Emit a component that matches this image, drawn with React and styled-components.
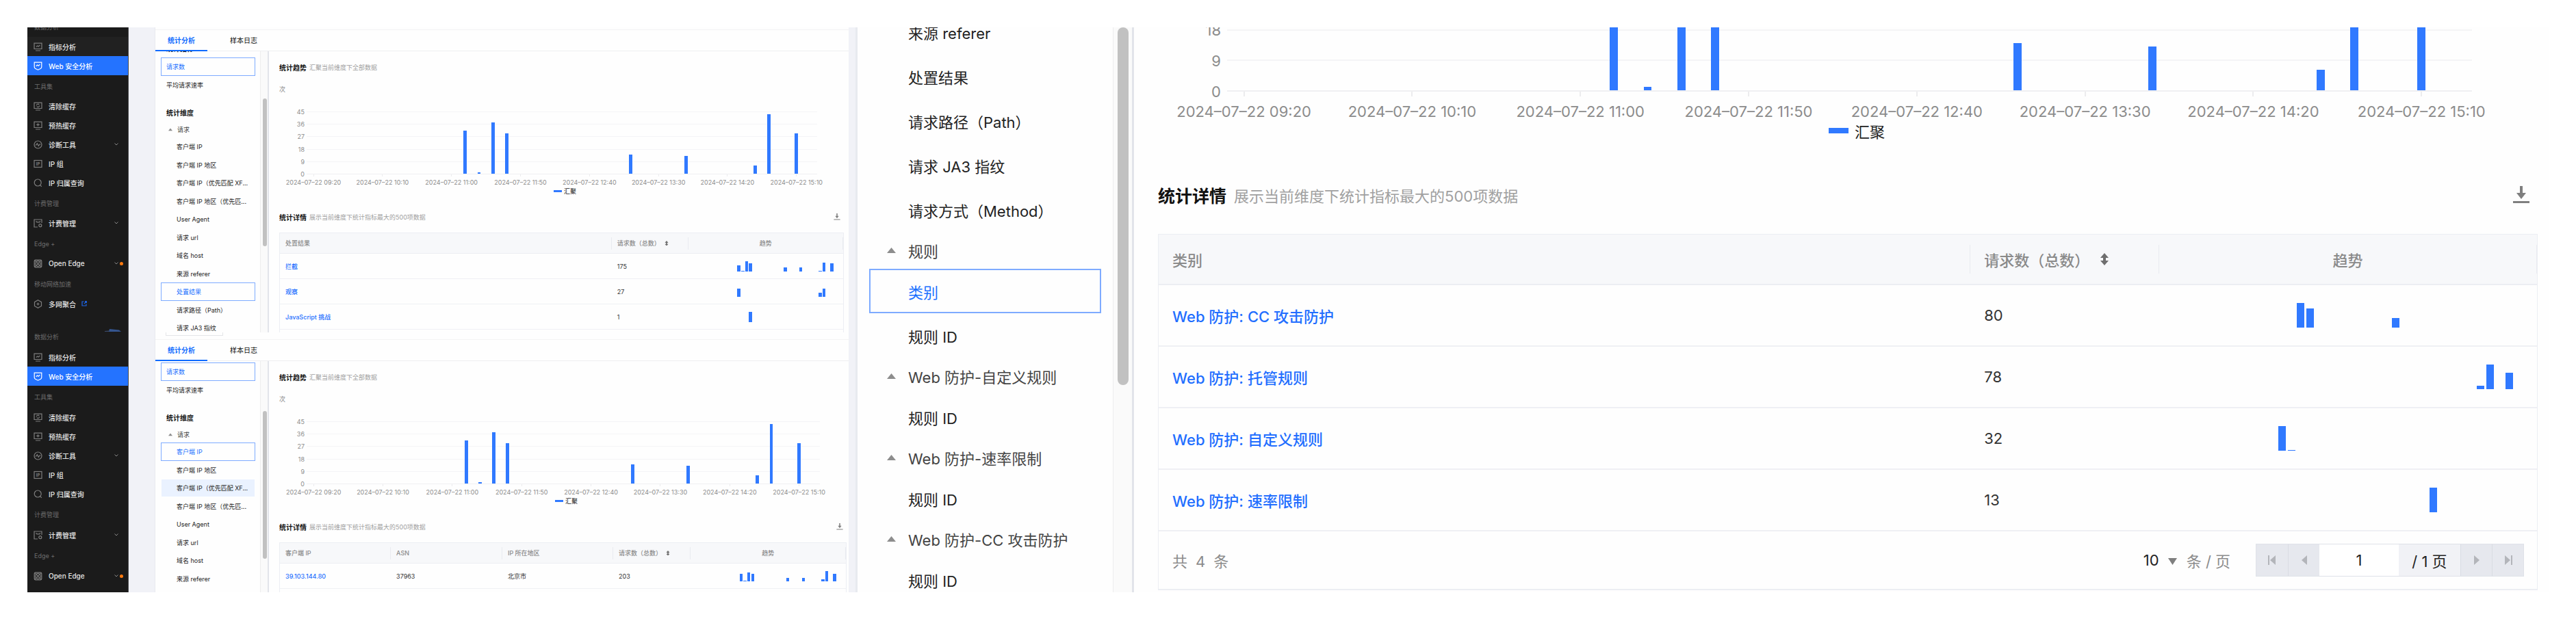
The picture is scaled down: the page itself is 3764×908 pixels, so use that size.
import React from "react";
import styled, { createGlobalStyle, css, ThemeProvider } from "styled-components";

const compact = {
  text: 9, title: 10, row: 16,
  mainTop: 15, mainLeft: 15, mainRight: 7,
  plotHeight: 92, plotLeft: 40, plotRight: 39, labelGap: 3, line: 1,
  tick: 3, tickGap: 2, axisRow: 14, legendRow: 10, legendW: 12, legendH: 3, legendShift: 10,
  detailGap: 25, tableGap: 15, head: 29, headInner: 18, cellRow: 36, cellPad: 8, spark: 15,
  titleGap: 4, icon: 10, sort: 6, sortGap: 6,
  item: 26, group: 23, border: 1, boxLeft: 8, boxRight: 7, childPad: 22, groupPad: 11, tri: 6, triGap: 7,
  track: 11, thumb: 6, thumbPad: 3, edge: 2,
};

const large = {
  text: 22, title: 25, row: 34,
  mainTop: 0, mainLeft: 35, mainRight: 16,
  plotHeight: 225, plotLeft: 101, plotRight: 96, labelGap: 9, line: 2,
  tick: 7, tickGap: 5, axisRow: 34, legendRow: 22, legendW: 29, legendH: 8, legendShift: 26,
  detailGap: 66, tableGap: 40, head: 72, headInner: 42, cellRow: 88, cellPad: 20, spark: 36,
  titleGap: 11, icon: 26, sort: 14, sortGap: 15,
  item: 65, group: 54, border: 2, boxLeft: 17, boxRight: 17, childPad: 55, groupPad: 26, tri: 13, triGap: 18,
  track: 28, thumb: 16, thumbPad: 6, edge: 3,
};

const px = (key) => ({ theme }) => `${theme[key]}px`;

const GlobalStyle = createGlobalStyle`
  * { box-sizing: border-box; }
  body {
    margin: 0;
    background: #fff;
    font-family: Inter, "Noto Sans CJK SC", sans-serif;
    color: #222;
  }
  button, input, select { font: inherit; color: inherit; margin: 0; }
`;

/* ---------- page frame ---------- */

const Board = styled.main`
  display: grid;
  grid-template-columns: minmax(0, 1200fr) minmax(0, 2484fr);
  padding: 40px;
`;

const Stack = styled.div`
  display: flex;
  flex-direction: column;
`;

const Shot = styled.section`
  display: flex;
  height: ${(p) => p.$height}px;
  overflow: hidden;
  background: #fefefe;
`;

const Gutter = styled.div`
  flex: none;
  width: ${(p) => p.$width}px;
  background: #f1f2f7;
  border-right: ${(p) => p.$edge}px solid #e8eaef;
`;

/* ---------- dark navigation ---------- */

const SideNav = styled.nav`
  flex: none;
  width: 148px;
  overflow: hidden;
  background: #1b1b1b;
  border-right: 1px solid #4a4b4f;
`;

const NavList = styled.div`
  display: flex;
  flex-direction: column;
  margin-top: ${(p) => p.$shift}px;
`;

const NavLabel = styled.div`
  height: ${(p) => p.$height}px;
  padding: 10px 0 0 10px;
  font-size: 9px;
  line-height: 14px;
  color: #6c6c6c;
`;

const NavLink = styled.a`
  display: flex;
  align-items: center;
  height: 28px;
  padding-left: 9px;
  font-size: 10px;
  font-weight: 500;
  text-decoration: none;
  white-space: nowrap;
  color: ${(p) => (p.$active ? "#fff" : "#e4e4e4")};
  background: ${(p) => (p.$active ? "#2473ff" : p.$hover ? "#212121" : "transparent")};
`;

const NavIcon = styled.svg`
  flex: none;
  width: 13px;
  height: 13px;
  margin-right: 9px;
  fill: none;
  stroke: ${(p) => (p.$active ? "#fff" : "#7d7d7d")};
  stroke-width: 1.2;
`;

const NavTrail = styled.span`
  display: flex;
  align-items: center;
  gap: 2px;
  width: 20px;
  margin-left: auto;
`;

const Chevron = styled.svg`
  width: 6px;
  height: 4px;
  fill: none;
  stroke: #8a8a8a;
`;

const Dot = styled.span`
  width: 5px;
  height: 5px;
  border-radius: 50%;
  background: #ff7a0f;
`;

const External = styled.svg`
  width: 8px;
  height: 8px;
  margin-left: 8px;
  fill: none;
  stroke: #1f66e8;
  stroke-width: 1.2;
`;

const NavCorner = styled.svg`
  display: block;
  width: 25px;
  height: 4px;
  margin: 23px 0 0 113px;
`;

const iconArt = {
  metric: (
    <>
      <path d="M1 1.2h11v8.3H1zM3 12h7" />
      <path d="M4 6.5l1.7-1.6 1.5 1L9.3 4" />
    </>
  ),
  shield: (
    <>
      <path d="M1.2 1.2h10.6v6.6c0 1-.5 1.9-1.4 2.4L6.5 12.2 2.6 10.2A2.700 2.700 0 0 1 1.200 7.800z" />
      <path d="M3.700 6.700l1.900-1.700 1.500 1.200 2.200-2" />
    </>
  ),
  purge: (
    <>
      <path d="M1 1.2h11v8.300H1zM3 12h7" />
      <path d="M4.300 5.200a2.200 2.200 0 0 1 3.900-1.200M8.700 5.500a2.200 2.200 0 0 1-3.900 1.200" />
    </>
  ),
  preheat: <path d="M1 1.200h11v8.300H1zM3 12h7M6.500 3.200v4.300M4.300 5.300h4.400" />,
  diagnose: (
    <>
      <circle cx="6.500" cy="6.500" r="5.500" />
      <path d="M2.500 7h1.500l1.300-2.200 2 3.500L8.800 6h1.700" />
    </>
  ),
  ipgroup: (
    <>
      <rect x="1" y="1.500" width="11" height="10" />
      <text x="6.500" y="8.700" fontSize="6" fontWeight="700" textAnchor="middle" fill="#7d7d7d" stroke="none">IP</text>
    </>
  ),
  search: (
    <>
      <circle cx="6.200" cy="6" r="5" />
      <path d="M9.600 9.600l2.200 2.200" />
    </>
  ),
  billing: (
    <>
      <path d="M6 12H1V1h11v5M3.500 3.500l1.500 1.300h3.500L10 3.500M1 12h3" />
      <circle cx="9.800" cy="9.700" r="2" />
    </>
  ),
  edge: (
    <>
      <rect x="1.200" y="1.200" width="10.600" height="10.600" rx="1.500" />
      <circle cx="6.500" cy="6.500" r="3.800" />
      <circle cx="6.500" cy="6.500" r="1.300" />
      <path d="M1.500 1.500l3.300 3.300M11.500 1.500L8.200 4.800M1.500 11.500l3.300-3.300M11.500 11.500L8.200 8.200" />
    </>
  ),
  merge: <path d="M6.500.800l5 2.900v5.700l-5 2.900-5-2.900V3.700zM6.500 4.500v4M4.500 6.500h4" />,
};

const navGroups = [
  { label: "数据分析", items: [{ icon: "metric", text: "指标分析" }, { icon: "shield", text: "Web 安全分析", active: true }] },
  {
    label: "工具集",
    items: [
      { icon: "purge", text: "清除缓存" },
      { icon: "preheat", text: "预热缓存" },
      { icon: "diagnose", text: "诊断工具", more: true },
      { icon: "ipgroup", text: "IP 组" },
      { icon: "search", text: "IP 归属查询" },
    ],
  },
  { label: "计费管理", items: [{ icon: "billing", text: "计费管理", more: true }] },
  { label: "Edge +", items: [{ icon: "edge", text: "Open Edge", more: true, dot: true }] },
  { label: "移动网络加速", items: [{ icon: "merge", text: "多网聚合", external: true }] },
];

function Navigation({ groups, shift, labelHeight, hovered, corner }) {
  return (
    <SideNav>
      <NavList $shift={shift}>
        {groups.map((group) => (
          <React.Fragment key={group.label}>
            <NavLabel $height={labelHeight}>{group.label}</NavLabel>
            {group.items.map((item) => (
              <NavLink key={item.text} href="#" $active={item.active} $hover={item.text === hovered}>
                <NavIcon viewBox="0 0 13 13" $active={item.active}>{iconArt[item.icon]}</NavIcon>
                {item.text}
                {item.external && (
                  <External viewBox="0 0 8 8">
                    <path d="M3.500 1H1v6h6V4.500M5 .700h2.300V3M7.300.700L3.800 4.200" />
                  </External>
                )}
                {item.more && (
                  <NavTrail>
                    <Chevron viewBox="0 0 6 4"><path d="M.500.500L3 3l2.500-2.500" /></Chevron>
                    {item.dot && <Dot />}
                  </NavTrail>
                )}
              </NavLink>
            ))}
          </React.Fragment>
        ))}
        {corner && (
          <NavCorner viewBox="0 0 25 4">
            <path d="M0 3l7-.500V4H0z" fill="#3a4a6a" />
            <path d="M7 0l14 1.500 3 2.500H6z" fill="#35558f" />
          </NavCorner>
        )}
      </NavList>
    </SideNav>
  );
}

/* ---------- tabs ---------- */

const Panel = styled.div`
  flex: 1;
  min-width: 0;
  display: flex;
  flex-direction: column;
`;

const FilterStrip = styled.div`
  flex: none;
  height: ${(p) => p.$height}px;
  padding-left: 15px;
  border-bottom: 1px solid #f3f3f4;
`;

const FilterBox = styled.div`
  width: 84px;
  height: 5px;
  border: 1px solid #e4e5e8;
  border-top: 0;
`;

const TabBar = styled.div`
  flex: none;
  display: flex;
  height: 31px;
  border-bottom: 1px solid #eeeff1;
`;

const Tab = styled.button`
  height: 31px;
  padding: 0 16px;
  margin-right: 15px;
  border: 0;
  border-bottom: 2px solid ${(p) => (p.$active ? "#0f6bff" : "transparent")};
  background: none;
  font-size: 10px;
  font-weight: ${(p) => (p.$active ? 700 : 400)};
  color: ${(p) => (p.$active ? "#0f6bff" : "#111")};
  width: 76px;
  white-space: nowrap;
`;

const PanelBody = styled.div`
  flex: 1;
  min-height: 0;
  display: flex;
  overflow: hidden;
`;

/* ---------- dimension list ---------- */

const Dimensions = styled.aside`
  flex: none;
  width: ${(p) => p.$width}px;
  overflow: hidden;
`;

const DimensionsInner = styled.div`
  margin-top: ${(p) => p.$shift}px;
`;

const DimensionHeading = styled.h3`
  margin: ${(p) => (p.$first ? "0" : "18px")} 0 3px 16px;
  font-size: 10px;
  font-weight: 700;
  line-height: 20px;
  color: #111;
`;

const DimensionGroup = styled.div`
  display: flex;
  align-items: center;
  height: ${px("group")};
  margin-left: ${px("boxLeft")};
  padding-left: ${px("groupPad")};
  gap: ${px("triGap")};
  font-size: ${px("text")};
  color: #444;
  white-space: nowrap;
`;

const Triangle = styled.svg`
  flex: none;
  width: ${px("tri")};
  fill: #8d8d8d;
`;

const DimensionItems = styled.ul`
  list-style: none;
  margin: 0 ${px("boxRight")} 0 ${px("boxLeft")};
  padding: 0;
  li { height: ${px("item")}; }
  ${({ theme }) => theme === compact && css`
    li:nth-child(odd) { height: 27px; }
  `}
`;

const DimensionButton = styled.button`
  display: block;
  width: 100%;
  height: 100%;
  padding: 0 0 0 ${(p) => (p.$root ? "7px" : `${p.theme.childPad}px`)};
  border: ${px("border")} solid ${(p) => (p.$selected ? "#7eabff" : "transparent")};
  background: ${(p) => (p.$hover ? "#eaf2ff" : "none")};
  background-clip: padding-box;
  font-size: ${px("text")};
  text-align: left;
  white-space: nowrap;
  color: ${(p) => (p.$selected ? "#1a70ff" : "#222")};
`;

const Track = styled.div`
  flex: none;
  width: ${px("track")};
  padding: ${(p) => p.$offset}px 0 0 ${px("thumbPad")};
  background: #fafafa;
  border-left: 1px solid #ededee;
`;

const Thumb = styled.div`
  width: ${px("thumb")};
  height: ${(p) => p.$length}px;
  border-radius: 8px;
  background: #c1c1c1;
`;

const TrackEdge = styled.div`
  flex: none;
  width: ${px("edge")};
  background: #e2e4ea;
`;

function DimensionSet({ items, selected, hovered, root }) {
  return (
    <DimensionItems>
      {items.map((text) => (
        <li key={text}>
          <DimensionButton type="button" $root={root} $selected={text === selected} $hover={text === hovered}>
            {text}
          </DimensionButton>
        </li>
      ))}
    </DimensionItems>
  );
}

function GroupTitle({ children }) {
  return (
    <DimensionGroup>
      <Triangle viewBox="0 0 13 10"><path d="M6.500 1L13 9H0z" /></Triangle>
      {children}
    </DimensionGroup>
  );
}

/* ---------- trend chart ---------- */

const Content = styled.div`
  flex: 1;
  min-width: 0;
  padding: ${px("mainTop")} ${(p) => p.$right ?? p.theme.mainRight}px 0 ${px("mainLeft")};
`;

const TitleRow = styled.header`
  display: flex;
  align-items: center;
  gap: ${px("titleGap")};
  height: ${px("row")};
`;

const Title = styled.h2`
  margin: 0;
  font-size: ${px("title")};
  font-weight: 700;
  color: #111;
  white-space: nowrap;
`;

const Note = styled.span`
  font-size: ${px("text")};
  color: #a0a0a0;
  white-space: nowrap;
`;

const Unit = styled.div`
  margin: 18px 0 25px;
  font-size: ${px("text")};
  line-height: 14px;
  color: #888;
`;

const ChartFrame = styled.div`
  display: grid;
  grid-template-columns: ${px("plotLeft")} minmax(0, 1fr);
  padding-right: ${px("plotRight")};
  margin-top: ${(p) => p.$shift}px;
`;

const YAxis = styled.div`
  display: flex;
  flex-direction: column;
  justify-content: space-between;
  padding-right: ${px("labelGap")};
  span {
    display: flex;
    align-items: center;
    justify-content: flex-end;
    height: 0;
    font-size: ${px("text")};
    color: #8c8c8c;
  }
`;

const Plot = styled.div`
  display: grid;
  height: ${px("plotHeight")};
  border-bottom: ${px("line")} solid #f0f0f2;
  > * { grid-area: 1 / 1; }
`;

const Lines = styled.div`
  display: grid;
  grid-template-rows: repeat(5, 1fr);
  i { border-top: ${px("line")} solid #f4f4f6; }
`;

const Bars = styled.div`
  display: grid;
  grid-template-columns: repeat(37, minmax(0, 1fr));
  grid-template-rows: minmax(0, 1fr);
  align-items: end;
  justify-items: center;
  height: 100%;
`;

const Bar = styled.div`
  width: ${(p) => (p.$dense ? "80%" : "24%")};
  min-height: ${(p) => (p.$dense ? "1px" : "2px")};
  background: #3079ff;
`;

const XAxis = styled.div`
  grid-column: 2;
  display: grid;
  grid-template-columns: repeat(37, minmax(0, 1fr));
`;

const TickLabel = styled.div`
  display: flex;
  flex-direction: column;
  align-items: center;
  grid-row: 1;
  font-size: ${px("text")};
  line-height: ${px("axisRow")};
  color: #8c8c8c;
  white-space: nowrap;
  &::before {
    content: "";
    width: ${px("line")};
    height: ${px("tick")};
    margin-bottom: ${px("tickGap")};
    background: #ececee;
  }
`;

const Legend = styled.div`
  display: flex;
  align-items: center;
  justify-content: center;
  gap: ${px("labelGap")};
  height: ${px("legendRow")};
  padding-left: ${px("legendShift")};
  margin-bottom: ${px("detailGap")};
  font-size: ${px("text")};
  color: #222;
  &::before {
    content: "";
    width: ${px("legendW")};
    height: ${px("legendH")};
    background: #3079ff;
  }
`;

const trend = { 11: 31, 12: 1, 13: 37, 14: 29, 23: 14, 27: 13, 32: 6, 33: 43, 35: 29 };
const times = ["09:20", "10:10", "11:00", "11:50", "12:40", "13:30", "14:20", "15:10"];

function BarSet({ data, max, dense }) {
  return (
    <Bars>
      {Object.entries(data).map(([slot, value]) => (
        <Bar key={slot} $dense={dense} style={{ gridColumn: Number(slot) + 1, gridRow: 1, height: `${(value / max) * 100}%` }} />
      ))}
    </Bars>
  );
}

function TrendChart({ shift = 0 }) {
  return (
    <>
      <ChartFrame $shift={shift}>
        <YAxis>{[45, 36, 27, 18, 9, 0].map((n) => <span key={n}>{n}</span>)}</YAxis>
        <Plot>
          <Lines><i /><i /><i /><i /><i /></Lines>
          <BarSet data={trend} max={45} />
        </Plot>
        <XAxis>
          {times.map((time, k) => (
            <TickLabel key={time} style={{ gridColumn: k * 5 + 1 }}>2024–07–22 {time}</TickLabel>
          ))}
        </XAxis>
      </ChartFrame>
      <Legend>汇聚</Legend>
    </>
  );
}

/* ---------- detail table ---------- */

const DownloadButton = styled.button`
  display: flex;
  margin-left: auto;
  margin-right: ${(p) => p.theme.labelGap + 2}px;
  padding: 0;
  border: 0;
  background: none;
  svg {
    width: ${px("icon")};
    height: ${px("icon")};
    fill: #7f7f7f;
  }
`;

const TableBox = styled.div`
  margin-top: ${px("tableGap")};
  border: 1px solid #eceef3;
  border-bottom-width: ${(p) => (p.$closed ? "2px" : "0")};
`;

const Table = styled.table`
  width: 100%;
  table-layout: fixed;
  border-collapse: separate;
  border-spacing: 0;
  font-size: ${px("text")};
  th, td { padding: 0; text-align: left; font-weight: 400; white-space: nowrap; }
  thead th {
    height: ${(p) => p.theme.head + p.theme.line}px;
    background: #f7f8fa;
    border-bottom: ${px("line")} solid #eceef3;
    color: #8a8a8a;
    font-weight: 500;
  }
  tbody td {
    height: ${(p) => p.theme.cellRow + p.theme.line}px;
    padding: 0 ${px("cellPad")};
    border-bottom: ${px("line")} solid #eff0f4;
    color: #333;
  }
`;

const HeadCell = styled.div`
  display: flex;
  align-items: center;
  justify-content: ${(p) => (p.$center ? "center" : "flex-start")};
  gap: ${px("sortGap")};
  height: ${px("headInner")};
  padding-left: ${(p) => (p.$center ? 0 : p.theme.cellPad)}px;
  border-right: 1px solid #e9ebf0;
`;

const SortIcon = styled.svg`
  width: ${px("sort")};
  fill: #6f6f6f;
`;

const RowLink = styled.a`
  color: #226eff;
  font-weight: 500;
  text-decoration: none;
`;

const Spark = styled.div`
  height: ${px("spark")};
`;

function DetailHeader() {
  return (
    <TitleRow>
      <Title>统计详情</Title>
      <Note>展示当前维度下统计指标最大的500项数据</Note>
      <DownloadButton type="button" aria-label="下载">
        <svg viewBox="0 0 26 26"><path d="M11 0h4v10h5l-7 9-7-9h5zM1 22h24v3H1z" /></svg>
      </DownloadButton>
    </TitleRow>
  );
}

function DetailTable({ columns, rows, footer }) {
  return (
    <TableBox $closed={Boolean(footer)}>
      <Table>
        <colgroup>
          {columns.map((c) => <col key={c.name} style={{ width: `${c.share}%` }} />)}
        </colgroup>
        <thead>
          <tr>
            {columns.map((c) => (
              <th key={c.name} scope="col">
                <HeadCell $center={c.center}>
                  {c.name}
                  {c.sort && (
                    <SortIcon viewBox="0 0 14 18"><path d="M7 0l6 7H9v4h4l-6 7-6-7h4V7H1z" /></SortIcon>
                  )}
                </HeadCell>
              </th>
            ))}
          </tr>
        </thead>
        <tbody>
          {rows.map((row) => (
            <tr key={row.name}>
              <td>{row.name && <RowLink href="#">{row.name}</RowLink>}</td>
              {row.cells.map((cell) => <td key={cell}>{cell}</td>)}
              <td><Spark>{row.bars && <BarSet dense data={row.bars} max={row.max} />}</Spark></td>
            </tr>
          ))}
        </tbody>
      </Table>
      {footer}
    </TableBox>
  );
}

/* ---------- pagination ---------- */

const Footer = styled.footer`
  display: flex;
  align-items: center;
  height: 84px;
  padding: 0 19px 0 20px;
  font-size: 22px;
  color: #8c8c8c;
`;

const Total = styled.span`
  display: flex;
  align-items: baseline;
  gap: 12px;
`;

const PageSize = styled.label`
  display: flex;
  align-items: center;
  margin: 0 37px 0 auto;
  white-space: nowrap;
`;

const SizeSelect = styled.select`
  appearance: none;
  width: 30px;
  padding: 0;
  border: 0;
  background: none;
  color: #222;
`;

const SizeArrow = styled.svg`
  width: 13px;
  height: 10px;
  margin: 4px 14px 0 6px;
  fill: #7f7f7f;
`;

const Pager = styled.div`
  display: flex;
  height: 48px;
  border: 1px solid #dfe2e8;
`;

const PagerButton = styled.button`
  display: flex;
  align-items: center;
  justify-content: center;
  width: 46px;
  padding: 0;
  border: 0;
  border-left: 1px solid #d9dce3;
  background: #e6e8ee;
  &:first-child { border-left: 0; }
  svg { width: 14px; height: 14px; fill: #b3b5ba; }
`;

const PageInput = styled.input`
  width: 116px;
  padding: 0;
  border: 0;
  background: #fff;
  text-align: center;
  color: #222;
`;

const PageTotal = styled.span`
  display: flex;
  align-items: center;
  justify-content: center;
  width: 90px;
  background: #f1f2f6;
  color: #222;
  white-space: nowrap;
`;

function Pagination() {
  return (
    <Footer>
      <Total><span>共</span><span>4</span><span>条</span></Total>
      <PageSize>
        <SizeSelect defaultValue="10" aria-label="每页条数"><option>10</option></SizeSelect>
        <SizeArrow viewBox="0 0 13 10"><path d="M0 0h13L6.500 10z" /></SizeArrow>
        条 / 页
      </PageSize>
      <Pager>
        <PagerButton type="button" aria-label="首页"><svg viewBox="0 0 14 14"><path d="M1 0h2v14H1zM12 0v14L4 7z" /></svg></PagerButton>
        <PagerButton type="button" aria-label="上一页"><svg viewBox="0 0 14 14"><path d="M11 0v14L3 7z" /></svg></PagerButton>
        <PageInput defaultValue="1" aria-label="页码" />
        <PageTotal>/ 1 页</PageTotal>
        <PagerButton type="button" aria-label="下一页"><svg viewBox="0 0 14 14"><path d="M3 0v14l8-7z" /></svg></PagerButton>
        <PagerButton type="button" aria-label="末页"><svg viewBox="0 0 14 14"><path d="M11 0h2v14h-2zM2 0v14l8-7z" /></svg></PagerButton>
      </Pager>
    </Footer>
  );
}

/* ---------- data ---------- */

const requestDimensions = [
  "客户端 IP", "客户端 IP 地区", "客户端 IP（优先匹配 XF...", "客户端 IP 地区（优先匹...", "User Agent",
  "请求 url", "域名 host", "来源 referer", "处置结果", "请求路径（Path）", "请求 JA3 指纹",
];

const countColumns = (a, b) => [
  { name: "请求数（总数）", share: a, sort: true },
  { name: "趋势", share: b, center: true },
];

const resultColumns = [{ name: "处置结果", share: 58.9 }, ...countColumns(13.7, 27.4)];
const clientColumns = [
  { name: "客户端 IP", share: 19.6 },
  { name: "ASN", share: 19.7 },
  { name: "IP 所在地区", share: 19.6 },
  ...countColumns(13.7, 27.4),
];
const categoryColumns = [{ name: "类别", share: 58.9 }, ...countColumns(13.7, 27.4)];

const resultRows = [
  { name: "拦截", cells: ["175"], max: 37, bars: { 11: 20, 12: 1, 13: 37, 14: 28, 23: 14, 27: 13, 32: 1, 33: 32, 35: 29 } },
  { name: "观察", cells: ["27"], max: 14, bars: { 11: 11, 32: 5, 33: 11 } },
  { name: "JavaScript 挑战", cells: ["1"], max: 1, bars: { 14: 1 } },
  { name: "", cells: [""] },
];
const clientRows = [
  { name: "39.103.144.80", cells: ["37963", "北京市", "203"], max: 43, bars: trend },
  { name: "", cells: ["", " ", "  "] },
];
const categoryRows = [
  { name: "Web 防护: CC 攻击防护", cells: ["80"], max: 37, bars: { 13: 37, 14: 29, 23: 14 } },
  { name: "Web 防护: 托管规则", cells: ["78"], max: 43, bars: { 32: 6, 33: 43, 35: 29 } },
  { name: "Web 防护: 自定义规则", cells: ["32"], max: 31, bars: { 11: 31, 12: 1 } },
  { name: "Web 防护: 速率限制", cells: ["13"], max: 13, bars: { 27: 13 } },
];

function Console({ height, strip, filter, nav, listShift, heading, selected, hovered, thumb, right, columns, rows }) {
  return (
    <Shot $height={height}>
      <Navigation {...nav} />
      <Gutter $width={39} $edge={1} />
      <Panel>
        <FilterStrip $height={strip}>{filter && <FilterBox />}</FilterStrip>
        <TabBar role="tablist">
          <Tab type="button" role="tab" aria-selected="true" $active>统计分析</Tab>
          <Tab type="button" role="tab" aria-selected="false">样本日志</Tab>
        </TabBar>
        <PanelBody>
          <Dimensions $width={153}>
            <DimensionsInner $shift={listShift}>
              {heading && <DimensionHeading $first>统计指标</DimensionHeading>}
              <DimensionSet root items={["请求数", "平均请求速率"]} selected="请求数" />
              <DimensionHeading>统计维度</DimensionHeading>
              <GroupTitle>请求</GroupTitle>
              <DimensionSet items={requestDimensions} selected={selected} hovered={hovered} />
            </DimensionsInner>
          </Dimensions>
          <Track $offset={thumb}><Thumb $length={216} /></Track>
          <TrackEdge />
          <Content $right={right}>
            <TitleRow>
              <Title>统计趋势</Title>
              <Note>汇聚当前维度下全部数据</Note>
            </TitleRow>
            <Unit>次</Unit>
            <TrendChart />
            <DetailHeader />
            <DetailTable columns={columns} rows={rows} />
          </Content>
        </PanelBody>
      </Panel>
    </Shot>
  );
}

function RuleView() {
  return (
    <Shot $height={826}>
      <Gutter $width={13} $edge={3} />
      <Dimensions $width={373}>
        <DimensionsInner $shift={-26}>
          <DimensionSet
            items={["来源 referer", "处置结果", "请求路径（Path）", "请求 JA3 指纹", "请求方式（Method）"]}
          />
          <GroupTitle>规则</GroupTitle>
          <DimensionSet items={["类别", "规则 ID"]} selected="类别" />
          {["Web 防护-自定义规则", "Web 防护-速率限制", "Web 防护-CC 攻击防护"].map((name) => (
            <React.Fragment key={name}>
              <GroupTitle>{name}</GroupTitle>
              <DimensionSet items={["规则 ID"]} />
            </React.Fragment>
          ))}
        </DimensionsInner>
      </Dimensions>
      <Track $offset={0}><Thumb $length={523} /></Track>
      <TrackEdge />
      <Content>
        <TrendChart shift={-131} />
        <DetailHeader />
        <DetailTable columns={categoryColumns} rows={categoryRows} footer={<Pagination />} />
      </Content>
    </Shot>
  );
}

export default function App() {
  return (
    <>
      <GlobalStyle />
      <Board>
        <ThemeProvider theme={compact}>
          <Stack>
            <Console
              height={446}
              strip={4}
              nav={{ groups: navGroups, shift: -17, labelHeight: 31, hovered: "指标分析", corner: true }}
              heading
              listShift={-14}
              selected="处置结果"
              thumb={69}
              columns={resultColumns}
              rows={resultRows}
            />
            <Console
              height={380}
              strip={11}
              filter
              nav={{ groups: navGroups.slice(0, 4), shift: -10, labelHeight: 32 }}
              listShift={2}
              selected="客户端 IP"
              hovered="客户端 IP（优先匹配 XF..."
              thumb={73}
              right={3}
              columns={clientColumns}
              rows={clientRows}
            />
          </Stack>
        </ThemeProvider>
        <ThemeProvider theme={large}>
          <RuleView />
        </ThemeProvider>
      </Board>
    </>
  );
}
